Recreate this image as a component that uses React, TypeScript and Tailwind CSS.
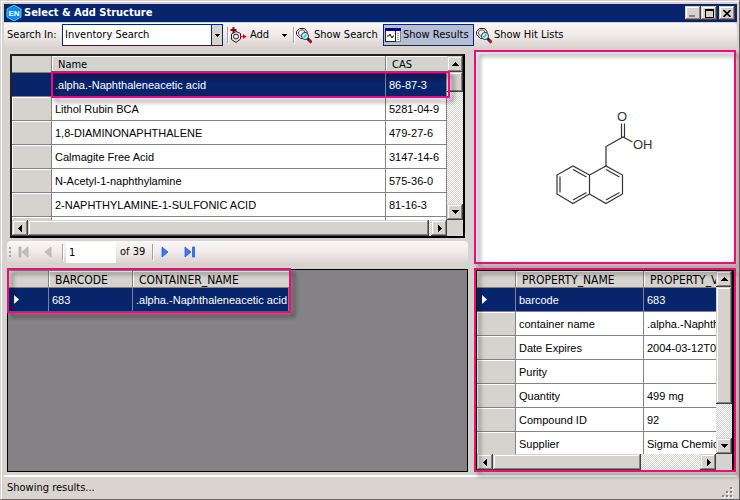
import React from 'react';
import clsx from 'clsx';

const UI = "font-['DejaVu_Sans_Condensed','DejaVu_Sans',sans-serif] [font-stretch:condensed]";
const RAISED =
  'bg-[#d6d3ce] shadow-[inset_-1px_-1px_0_#424142,inset_1px_1px_0_#d6d3ce,inset_-2px_-2px_0_#848284,inset_2px_2px_0_#fff]';
const DITHER = 'bg-[repeating-conic-gradient(#fff_0_25%,#d6d3ce_0_50%)] bg-[length:2px_2px]';
const BAR = 'bg-linear-to-b from-[#fbf7f7] via-[#f0eae9] to-[#dcd4d2]';

type Dir = 'up' | 'down' | 'left' | 'right';
const arrows: Record<Dir, string> = {
  up: 'M4 2h1v1h1v1h1v1h1v1H1V5h1V4h1V3h1z',
  down: 'M1 2h7v1H7v1H6v1H5v1H4V5H3V4H2V3H1z',
  left: 'M5 1h1v7H5V7H4V6H3V5H2V4h1V3h1V2h1z',
  right: 'M3 1h1v1h1v1h1v1h1v1H6v1H5v1H4v1H3z',
};

function Arrow({ dir }: { dir: Dir }) {
  return (
    <svg width="9" height="9" shapeRendering="crispEdges" aria-hidden="true">
      <path d={arrows[dir]} />
    </svg>
  );
}

function ScrollButton({ dir }: { dir: Dir }) {
  return (
    <button aria-label={'Scroll ' + dir} className={clsx('flex size-4 shrink-0 items-center justify-center', RAISED)}>
      <Arrow dir={dir} />
    </button>
  );
}

function ScrollFrame({
  children,
  vThumb,
  hThumb,
}: {
  children: React.ReactNode;
  vThumb: string;
  hThumb: string;
}) {
  return (
    <div className="grid h-full min-h-0 grid-cols-[minmax(0,1fr)_16px] grid-rows-[minmax(0,1fr)_16px] bg-[#d6d3ce]">
      <div className="overflow-hidden bg-white">{children}</div>
      <div className={clsx('flex flex-col', DITHER)}>
        <ScrollButton dir="up" />
        <div className={clsx(vThumb, RAISED)} />
        <div className="flex-1" />
        <ScrollButton dir="down" />
      </div>
      <div className={clsx('flex', DITHER)}>
        <ScrollButton dir="left" />
        <div className={clsx(hThumb, RAISED)} />
        <ScrollButton dir="right" />
      </div>
      <div />
    </div>
  );
}

interface GridProps {
  columns: string[];
  widths: string[];
  rows: string[][];
  marker?: boolean;
  headSize: string;
  className: string;
}

function DataGrid({ columns, widths, rows, marker, headSize, className }: GridProps) {
  return (
    <table className={clsx('table-fixed border-separate border-spacing-0 bg-white', className)}>
      <colgroup>
        {widths.map((w, i) => (
          <col key={i} className={w} />
        ))}
      </colgroup>
      <thead>
        <tr className="bg-[#d6d3ce]">
          <td className="border-r border-b border-[#848284] p-0" />
          {columns.map((c, i) => (
            <th key={c} className={clsx('border-b border-[#848284] p-0 text-left font-normal', UI)}>
              <div
                className={clsx(
                  'h-4 overflow-hidden pl-1.5 leading-[18px] whitespace-nowrap shadow-[inset_1px_1px_0_#fff]',
                  headSize,
                  i < columns.length - 1 && 'border-r border-[#848284]',
                )}
              >
                {c}
              </div>
            </th>
          ))}
        </tr>
      </thead>
      <tbody>
        {rows.map((r, n) => (
          <tr key={n} className={n === 0 ? 'bg-[#08246b] text-white' : 'text-black'}>
            <th
              scope="row"
              aria-label={'Row ' + (n + 1)}
              className={clsx(
                'h-6 border-r border-b border-[#848284] p-0',
                n > 0 && 'bg-[#d6d3ce] shadow-[inset_1px_1px_0_#fff]',
              )}
            >
              {n === 0 && marker && (
                <svg width="6" height="9" className="ml-1 fill-white" aria-hidden="true">
                  <path d="M1 0l5 4.500-5 4.500z" />
                </svg>
              )}
            </th>
            {r.map((v, i) => (
              <td
                key={i}
                className="h-6 overflow-hidden border-r border-b border-[#848284] p-0 pt-px pl-[3px] text-[11px] leading-[22px] whitespace-nowrap"
              >
                {v}
              </td>
            ))}
          </tr>
        ))}
      </tbody>
    </table>
  );
}

function Highlight({ className }: { className: string }) {
  return (
    <div
      className={clsx(
        'pointer-events-none absolute z-10 border-2 border-[#f4087e] [filter:drop-shadow(4px_4px_2px_rgba(0,0,0,0.5))]',
        className,
      )}
    />
  );
}

function AddIcon() {
  return (
    <svg width="17" height="17" viewBox="0 0 17 17" fill="none" aria-hidden="true">
      <path d="M6 4.500L10.500 6.500V12L6 15.500L1.500 12.500V7z" stroke="#222" />
      <circle cx="6" cy="9.500" r="2.500" stroke="#222" />
      <path d="M3.500 0v6M0.500 3h6" stroke="#8c0000" strokeWidth="2" />
      <path d="M10 9.500h5" stroke="#f00" />
      <path d="M13 7l3.500 2.500L13 12z" fill="#f00" />
    </svg>
  );
}

function SearchIcon() {
  return (
    <svg width="16" height="17" viewBox="0 0 16 17" fill="none" aria-hidden="true">
      <path d="M3.500 1.500h5l2.500 3v3l-2.500 4h-4L.5 7.500V4.500z" stroke="#222" />
      <path d="M4.500 3h3l1.500 2v3l-2 1.500h-2L2.500 7V5z" stroke="#555" />
      <circle cx="9" cy="9" r="3.500" fill="#d8ffff" stroke="#333" />
      <path d="M7.500 10.500l3-3" stroke="#19dce8" strokeWidth="2" />
      <path d="M11.500 11.500l4 4" stroke="#222" strokeWidth="3" />
      <path d="M13 13l2.500 2.500" stroke="#e00018" strokeWidth="2" />
    </svg>
  );
}

function ResultsIcon() {
  return (
    <svg width="16" height="14" viewBox="0 0 16 14" fill="none" shapeRendering="crispEdges" aria-hidden="true">
      <path d="M0 0h16v14H0z" fill="#fff" />
      <path d="M0 0h16v3H0z" fill="#000084" />
      <path d="M.5 3v10.500h10V3" stroke="#222" />
      <path d="M15.500 3v10.500H11" stroke="#848284" />
      <path d="M12 5h2M12 7h2M12 9h2M12 11h2" stroke="#8aa0c8" />
      <path d="M2 8h2l1-2 2 4 1-2h1" stroke="#111" shapeRendering="auto" />
    </svg>
  );
}

function Molecule() {
  return (
    <svg
      width="100"
      height="96"
      viewBox="554 108 100 96"
      fill="none"
      stroke="#333"
      strokeWidth="1.2"
      role="img"
      aria-label="Structure"
    >
      <path d="M588.500 174L572 165L556 174V193L572 202.500L588.500 193V174L605 165L621.500 174V193L605 202.500L588.500 193" />
      <path d="M559 175.500V191.500M572 168.500L585.500 176M572 199L585.500 191.500M605 168.500L618.500 176M605 199L618.500 191.500" />
      <path d="M605 165V145.500L622 136L631.500 141M620.500 136V122.500M623.500 136V122.500" />
      <g fill="#333" stroke="none" fontSize="13" fontFamily="Liberation Sans, sans-serif">
        <text x="616" y="120">O</text>
        <text x="632" y="148">OH</text>
      </g>
    </svg>
  );
}

function NavIcon({ d, active }: { d: string; active?: boolean }) {
  return (
    <svg
      width="12"
      height="12"
      viewBox="0 0 12 12"
      className={active ? 'fill-[#3c78ee] stroke-[#1c50c8]' : 'fill-[#c4c0c0] stroke-[#aaa6a6]'}
      strokeWidth=".7"
      aria-hidden="true"
    >
      <path d={d} />
    </svg>
  );
}

const Divider = () => <div className="h-4 w-px shrink-0 bg-[#a5a2a5] shadow-[1px_1px_0_#fff]" />;

const compounds = [
  ['.alpha.-Naphthaleneacetic acid', '86-87-3'],
  ['Lithol Rubin BCA', '5281-04-9'],
  ['1,8-DIAMINONAPHTHALENE', '479-27-6'],
  ['Calmagite Free Acid', '3147-14-6'],
  ['N-Acetyl-1-naphthylamine', '575-36-0'],
  ['2-NAPHTHYLAMINE-1-SULFONIC ACID', '81-16-3'],
  ['', ''],
];

const properties = [
  ['barcode', '683'],
  ['container name', '.alpha.-Naphthaleneacetic acid'],
  ['Date Expires', '2004-03-12T00:00:00'],
  ['Purity', ''],
  ['Quantity', '499 mg'],
  ['Compound ID', '92'],
  ['Supplier', 'Sigma Chemical'],
];

export default function App() {
  return (
    <div className="flex h-screen flex-col overflow-hidden border-t border-r border-b border-l border-t-[#d6d3ce] border-r-[#636163] border-b-[#636163] border-l-[#d6d3ce] bg-[#d6d3ce] font-['Liberation_Sans',Arial,sans-serif] text-black">
      <div className="flex min-h-0 flex-1 flex-col border-t border-l border-white pt-0.5 pr-0.5 pb-px pl-0.5">
        <header className="flex h-[18px] shrink-0 items-center bg-[#08246b] pr-0.5 pl-0.5 text-white">
          <svg width="16" height="16" viewBox="0 0 16 16" aria-hidden="true">
            <path d="M8 0l7 4v8l-7 4-7-4V4z" fill="#1689dd" stroke="#63c4f5" />
            <text x="8" y="11" textAnchor="middle" fontSize="8" fontWeight="bold" fontFamily="Liberation Sans, sans-serif" fill="#fff">
              EN
            </text>
          </svg>
          <h1 className={clsx('ml-0.5 flex-1 text-[11px] leading-4 font-bold whitespace-nowrap', UI)}>Select &amp; Add Structure</h1>
          <button aria-label="Minimize" className={clsx('flex h-3.5 w-4 items-end pb-[3px] pl-1', RAISED)}>
            <span className="h-0.5 w-1.5 bg-[#848284]" />
          </button>
          <button aria-label="Maximize" className={clsx('flex h-3.5 w-4 items-center justify-center', RAISED)}>
            <span className="h-[9px] w-[9px] border border-t-2 border-black" />
          </button>
          <button aria-label="Close" className={clsx('ml-0.5 flex h-3.5 w-4 items-center justify-center', RAISED)}>
            <svg width="8" height="7" aria-hidden="true">
              <path d="M.5 0l7 7M7.500 0l-7 7" stroke="#000" strokeWidth="1.700" />
            </svg>
          </button>
        </header>

        <div
          role="toolbar"
          className={clsx('mt-px flex h-6 shrink-0 items-center rounded-r-sm pl-[3px] text-[11px] leading-4 whitespace-nowrap', BAR, UI)}
        >
          <label htmlFor="search-in" className="w-[55px]">
            Search In:
          </label>
          <div className="relative h-[22px] w-[161px] border border-[#08246b] bg-white">
            <select id="search-in" className="h-full w-full appearance-none bg-transparent pl-0.5 text-[11px] outline-none">
              <option>Inventory Search</option>
            </select>
            <span className="pointer-events-none absolute inset-y-0 right-0 flex w-[11px] items-center justify-center border-l border-[#08246b] bg-[#d6d3ce]">
              <svg width="5" height="3" shapeRendering="crispEdges" aria-hidden="true">
                <path d="M0 0h5v1H4v1H3v1H2V2H1V1H0z" />
              </svg>
            </span>
          </div>
          <div className="ml-1 flex items-center gap-0.5">
            <Divider />
            <button className="flex w-[61px] items-center gap-[3px]">
              <AddIcon />
              <span className="flex-1 text-left">Add</span>
              <svg width="5" height="3" className="mr-1" shapeRendering="crispEdges" aria-hidden="true">
                <path d="M0 0h5v1H4v1H3v1H2V2H1V1H0z" />
              </svg>
            </button>
            <Divider />
            <button className="flex h-[22px] w-[87px] items-center gap-0.5">
              <SearchIcon />
              Show Search
            </button>
          </div>
          <button className="flex h-[22px] w-[91px] items-center gap-0.5 border border-[#08246b] bg-[#b5bed6] pl-px">
            <ResultsIcon />
            Show Results
          </button>
          <button className="flex h-[22px] items-center gap-0.5 pl-0.5">
            <SearchIcon />
            Show Hit Lists
          </button>
        </div>

        <main className="flex min-h-0 flex-1 gap-1.5 py-[3px] pr-px pl-[3px]">
          <section className="flex min-w-0 flex-1 flex-col">
            <div className="relative mx-[3px] mt-1 h-[184px] shrink-0 border-2 border-t-[#222] border-r-black border-b-black border-l-[#222]">
              <ScrollFrame vThumb="h-5" hThumb="mr-0.5 flex-1">
                <DataGrid
                  columns={['Name', 'CAS']}
                  widths={['w-10', '', 'w-[61px]']}
                  rows={compounds}
                  headSize="text-[11px]"
                  className="w-full"
                />
              </ScrollFrame>
              <Highlight className="top-[15px] right-[13px] left-[39px] h-[27px]" />
            </div>

            <nav aria-label="Records" className={clsx('mt-[3px] flex h-[22px] shrink-0 items-center rounded-sm text-[11px] leading-4', BAR, UI)}>
              <div className="ml-0.5 flex w-[9px] flex-col gap-0.5">
                <i className="size-0.5 bg-[#a5a2a5]" />
                <i className="size-0.5 bg-[#a5a2a5]" />
                <i className="size-0.5 bg-[#a5a2a5]" />
              </div>
              <button aria-label="First record" disabled>
                <NavIcon d="M1 1h2v10H1zM10 1v10L4 6z" />
              </button>
              <button aria-label="Previous record" disabled className="ml-3">
                <NavIcon d="M9 1v10L3 6z" />
              </button>
              <div className="ml-2 flex items-center gap-[3px]">
                <Divider />
                <input aria-label="Record" defaultValue="1" className="h-[21px] w-[50px] bg-white pl-[3px] text-[11px] outline-none" />
              </div>
              <span className="ml-1 w-8 whitespace-nowrap">of 39</span>
              <Divider />
              <button aria-label="Next record" className="ml-[7px]">
                <NavIcon active d="M2 1v10L8 6z" />
              </button>
              <button aria-label="Last record" className="ml-3">
                <NavIcon active d="M1 1v10L7 6zM8.500 1h2v10h-2z" />
              </button>
            </nav>

            <div className="relative mt-1.5 min-h-0 flex-1 border border-black bg-[#848284]">
              <div className="pt-px pl-px">
                <DataGrid
                  marker
                  columns={['BARCODE', 'CONTAINER_NAME']}
                  widths={['w-10', 'w-[84px]', 'w-[156px]']}
                  rows={[['683', '.alpha.-Naphthaleneacetic acid']]}
                  headSize="text-[12px]"
                  className="w-[280px]"
                />
              </div>
              <Highlight className="-top-0.5 -left-px h-[45px] w-[284px]" />
            </div>
          </section>

          <aside className="flex w-[262px] shrink-0 flex-col gap-1">
            <div className="relative flex h-[214px] shrink-0 items-center justify-center bg-white">
              <Molecule />
              <Highlight className="inset-0" />
            </div>
            <div className="relative min-h-0 flex-1 border-2 border-transparent">
              <div className="h-full border-t border-r-2 border-l border-black">
                <ScrollFrame vThumb="h-[117px]" hThumb="mr-auto w-[148px]">
                  <DataGrid
                    marker
                    columns={['PROPERTY_NAME', 'PROPERTY_VALUE']}
                    widths={['w-[39px]', 'w-32', 'w-40']}
                    rows={properties}
                    headSize="text-[12px]"
                    className="w-[327px]"
                  />
                </ScrollFrame>
              </div>
              <Highlight className="-inset-0.5" />
            </div>
          </aside>
        </main>

        <footer className={clsx('flex h-[23px] shrink-0 items-center border-t-2 border-white bg-[#dad4d0] pr-1 pl-[3px] text-[11px] leading-4', UI)}>
          <span className="flex-1">Showing results...</span>
          <svg width="11" height="11" className="self-end" shapeRendering="crispEdges" aria-hidden="true">
            <path d="M9 1h2v2H9zM5 5h2v2H5zM9 5h2v2H9zM1 9h2v2H1zM5 9h2v2H5zM9 9h2v2H9z" fill="#fff" />
            <path d="M8 0h2v2H8zM4 4h2v2H4zM8 4h2v2H8zM0 8h2v2H0zM4 8h2v2H4zM8 8h2v2H8z" fill="#848284" />
          </svg>
        </footer>
      </div>
    </div>
  );
}
